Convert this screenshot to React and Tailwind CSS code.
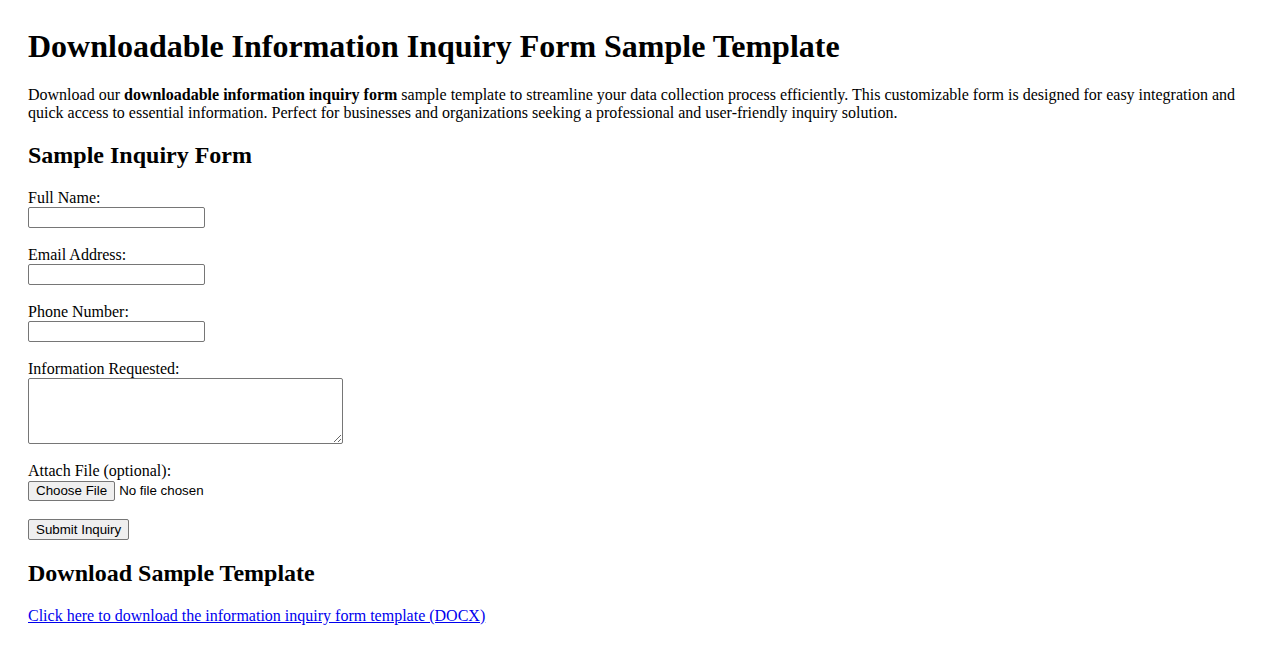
export default function App() {
  const fields = [
    { id: "name", label: "Full Name:", type: "text" },
    { id: "email", label: "Email Address:", type: "email" },
    { id: "phone", label: "Phone Number:", type: "tel" },
  ];

  return (
    <div className="min-h-screen bg-white px-[28px] pt-[28px] pb-10 text-black font-['Liberation_Serif','Times_New_Roman',serif]">
      <h1 className="text-[32px] font-bold leading-[37px]">
        Downloadable Information Inquiry Form Sample Template
      </h1>
      <p className="mt-[21px] text-[16px] leading-[18px]">
        Download our <strong>downloadable information inquiry form</strong>{" "}
        sample template to streamline your data collection process efficiently.
        This customizable form is designed for easy integration and quick access
        to essential information. Perfect for businesses and organizations
        seeking a professional and user-friendly inquiry solution.
      </p>

      <h2 className="mt-[19px] text-[24px] font-bold leading-[28px]">
        Sample Inquiry Form
      </h2>

      <form
        className="mt-[19px] flex flex-col items-start text-[16px] leading-[18px]"
        onSubmit={(e) => e.preventDefault()}
      >
        {/* Text inputs */}
        {fields.map((f) => (
          <div key={f.id} className="mb-[17px] flex flex-col items-start">
            <label htmlFor={f.id} className="pt-px">
              {f.label}
            </label>
            <input
              id={f.id}
              type={f.type}
              className="h-[21px] w-[177px] rounded-[2px] border border-[#767676] bg-white px-[2px] text-[13.333px] font-['Liberation_Sans',Arial,sans-serif]"
            />
          </div>
        ))}

        {/* Textarea */}
        <div className="mb-[17px] flex flex-col items-start">
          <label htmlFor="info" className="pt-px">
            Information Requested:
          </label>
          <textarea
            id="info"
            className="h-[66px] w-[315px] rounded-[2px] border border-[#767676] bg-white px-[2px] text-[13.333px] font-['Liberation_Mono',monospace]"
          />
        </div>

        {/* File */}
        <div className="mb-[18px] flex flex-col items-start">
          <label htmlFor="file" className="pt-px">
            Attach File (optional):
          </label>
          <input
            id="file"
            type="file"
            className="mt-px text-[13.333px] leading-[16px] font-['Liberation_Sans',Arial,sans-serif] file:mr-[4px] file:h-[20px] file:rounded-[2px] file:border file:border-solid file:border-[#767676] file:bg-[#efefef] file:px-[7px] file:text-[13.333px] file:text-black"
          />
        </div>

        <button
          type="submit"
          className="h-[21px] rounded-[2px] border border-[#767676] bg-[#efefef] px-[7px] text-[13.333px] leading-[16px] font-['Liberation_Sans',Arial,sans-serif]"
        >
          Submit Inquiry
        </button>
      </form>

      <h2 className="mt-[19px] text-[24px] font-bold leading-[28px]">
        Download Sample Template
      </h2>
      <p className="mt-[20px] text-[16px] leading-[18px]">
        <a href="#" className="text-[#0000ee] underline">
          Click here to download the information inquiry form template (DOCX)
        </a>
      </p>
    </div>
  );
}
